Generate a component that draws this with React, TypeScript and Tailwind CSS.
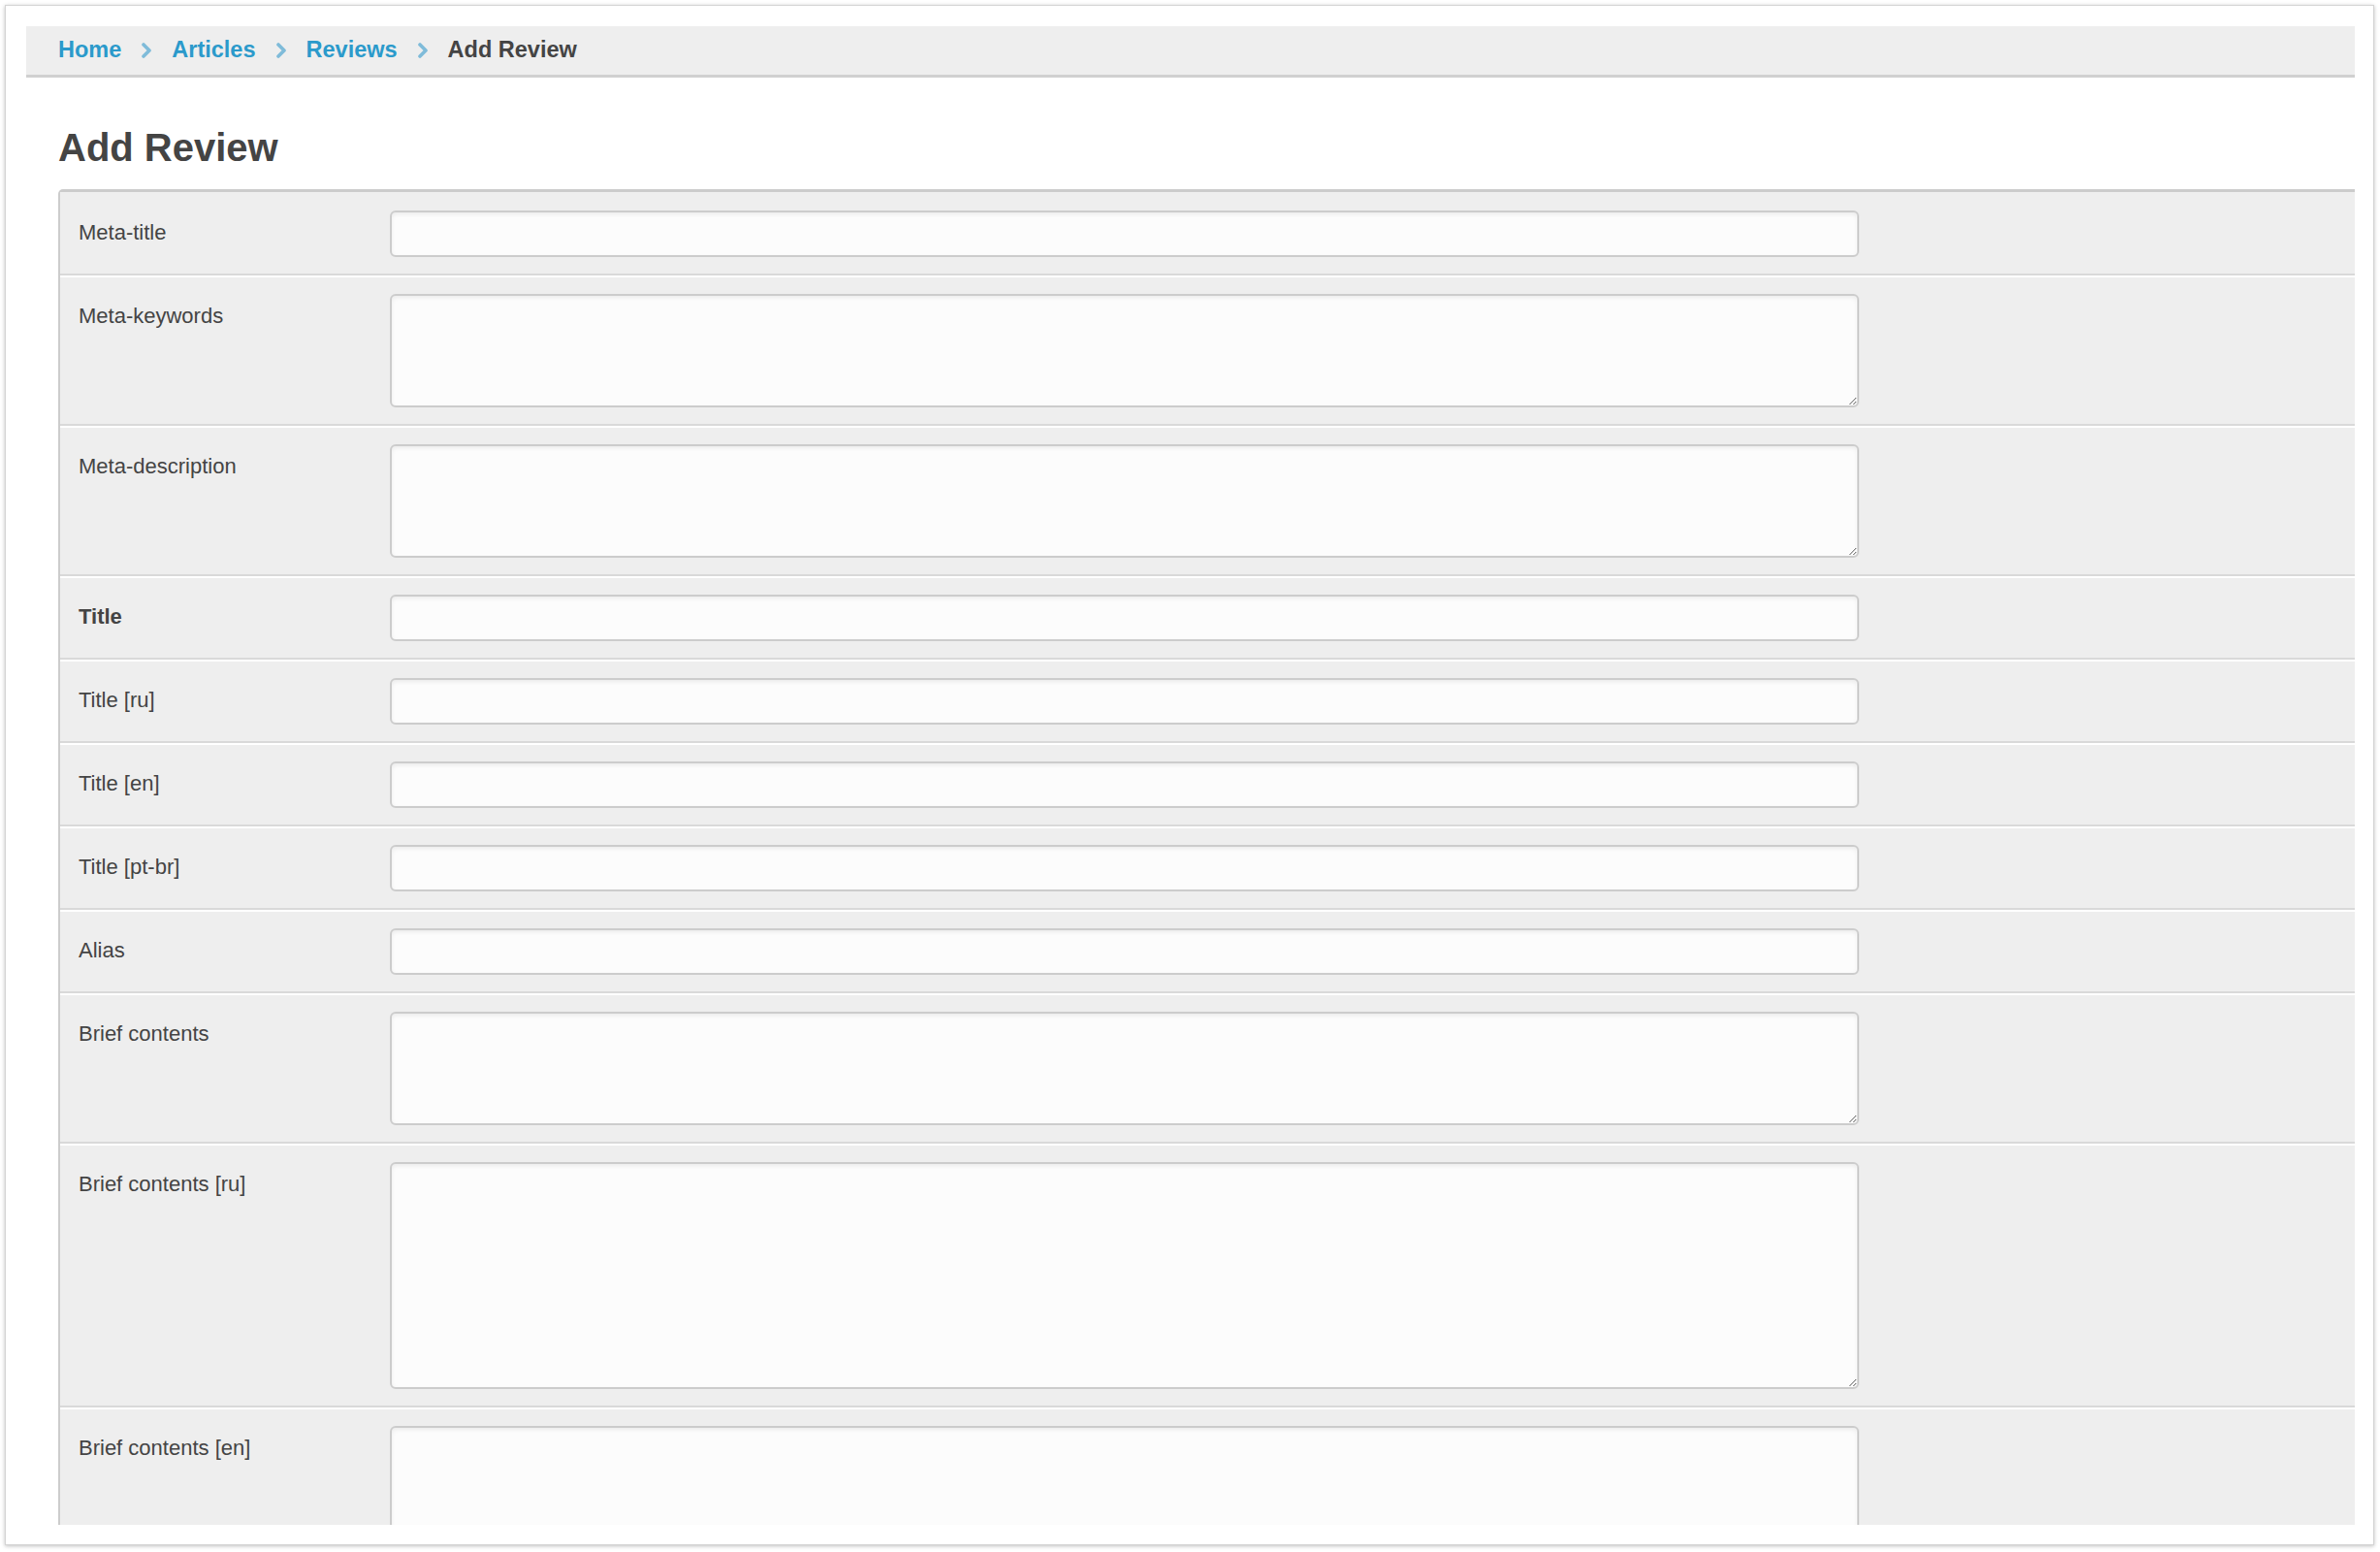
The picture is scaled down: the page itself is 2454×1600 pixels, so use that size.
import React from "react";

type Field = { label: string; kind: "input" | "area" | "big"; bold?: boolean };

const fields: Field[] = [
  { label: "Meta-title", kind: "input" },
  { label: "Meta-keywords", kind: "area" },
  { label: "Meta-description", kind: "area" },
  { label: "Title", kind: "input", bold: true },
  { label: "Title [ru]", kind: "input" },
  { label: "Title [en]", kind: "input" },
  { label: "Title [pt-br]", kind: "input" },
  { label: "Alias", kind: "input" },
  { label: "Brief contents", kind: "area" },
  { label: "Brief contents [ru]", kind: "big" },
  { label: "Brief contents [en]", kind: "big" },
];

function Chevron() {
  return (
    <svg width="12" height="16" viewBox="0 0 12 16" className="mx-[20px] shrink-0">
      <path d="M3 2 L9 8 L3 14" fill="none" stroke="#7fbbd9" strokeWidth="3.6" strokeLinecap="round" strokeLinejoin="round" />
    </svg>
  );
}

const fieldCls =
  "block w-[1515px] bg-[#fcfcfc] border-2 border-[#cccccc] rounded-[6px] shadow-[inset_0_2px_4px_rgba(0,0,0,0.07)] outline-none";

export default function App() {
  return (
    <div className="w-[2454px] h-[1600px] bg-white overflow-hidden" style={{ fontFamily: '"Liberation Sans", Arial, sans-serif' }}>
      <div className="ml-[5px] mt-[5px] w-[2443px] h-[1588px] bg-white border border-[#d4d4d4] shadow-[0_1px_4px_rgba(0,0,0,0.25)] pt-[21px] pl-[21px] pr-[19px] pb-[20px] flex flex-col">
        <div className="h-[53px] shrink-0 bg-[#eeeeee] border-b-[3px] border-[#d0d0d0] flex items-center pl-[33px] text-[23.5px] font-bold">
          <span className="text-[#2b9acb]">Home</span>
          <Chevron />
          <span className="text-[#2b9acb]">Articles</span>
          <Chevron />
          <span className="text-[#2b9acb]">Reviews</span>
          <Chevron />
          <span className="text-[#444444]">Add Review</span>
        </div>
        <h1 className="mt-[48px] mb-[19px] ml-[33px] text-[40px] leading-[48px] font-bold text-[#444444]">Add Review</h1>
        <div className="flex-1 overflow-hidden ml-[33px]">
          <div className="border-t-[3px] border-l-2 border-[#cccccc] rounded-tl-[5px] bg-[#eeeeee]">
            {fields.map((f, i) => (
              <div
                key={f.label}
                className={
                  "flex items-start bg-[#eeeeee] border-b-2 border-[#d9d9d9] pb-[17px] " +
                  (i === 0 ? "pt-[19px]" : "pt-[17px] border-t-2 border-t-white")
                }
              >
                <div className="w-[340px] shrink-0 pl-[19px] h-[45px] flex items-center">
                  <span className={"text-[22px] text-[#444444] " + (f.bold ? "font-bold" : "")}>{f.label}</span>
                </div>
                {f.kind === "input" ? (
                  <input type="text" className={fieldCls + " h-[48px]"} />
                ) : f.kind === "area" ? (
                  <textarea className={fieldCls + " h-[117px]"} />
                ) : (
                  <textarea className={fieldCls + " h-[234px]"} />
                )}
              </div>
            ))}
          </div>
        </div>
      </div>
    </div>
  );
}
